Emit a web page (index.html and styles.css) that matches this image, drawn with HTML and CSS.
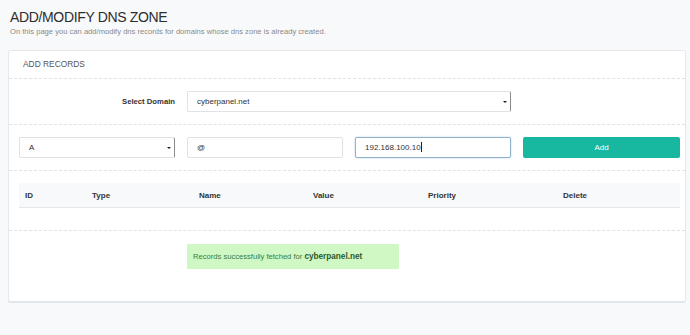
FILE: index.html
```html
<!DOCTYPE html>
<html>
<head>
<meta charset="utf-8">
<link rel="stylesheet" href="styles.css">
</head>
<body>
<div class="page">
  <div class="head">
    <h1 class="title">ADD/MODIFY DNS ZONE</h1>
    <p class="sub">On this page you can add/modify dns records for domains whose dns zone is already created.</p>
  </div>
  <div class="panel">
    <div class="panel-title">ADD RECORDS</div>
    <div class="sect domain-row">
      <label class="lbl">Select Domain</label>
      <div class="field sel wide">cyberpanel.net<span class="arrow"></span></div>
    </div>
    <div class="sect rec-row">
      <div class="field sel">A<span class="arrow"></span></div>
      <div class="field">@</div>
      <div class="field focus">192.168.100.10<span class="caret"></span></div>
      <div class="btn">Add</div>
    </div>
    <div class="sect table-sect">
      <div class="thead">
        <span class="c1">ID</span>
        <span class="c2">Type</span>
        <span class="c3">Name</span>
        <span class="c4">Value</span>
        <span class="c5">Priority</span>
        <span class="c6">Delete</span>
      </div>
    </div>
    <div class="alert-row">
      <div class="alert">Records successfully fetched for <b>cyberpanel.net</b></div>
    </div>
  </div>
</div>
</body>
</html>
```
FILE: styles.css
```css
html, body {
  margin: 0;
  padding: 0;
  background: #f8f9fb;
  font-family: "Liberation Sans", Arial, sans-serif;
  color: #333;
}
.page {
  padding: 6px 2px 0 8px;
}
.head {
  padding-left: 2px;
  height: 44px;
}
.title {
  margin: 0;
  padding-top: 2px;
  font-size: 14px;
  font-weight: normal;
  color: #2d2d2d;
  line-height: 19px;
  letter-spacing: -0.35px;
}
.sub {
  margin: 0;
  font-size: 7.6px;
  color: #8a8a8a;
  line-height: 10px;
}
.panel {
  background: #fff;
  border: 1px solid #e6e8eb;
  border-bottom: 2px solid #e3e6e9;
  border-radius: 2px;
  width: 678px;
  height: 253px;
  box-sizing: border-box;
}
.panel-title {
  height: 27px;
  line-height: 27px;
  padding-left: 14px;
  font-size: 8.4px;
  color: #555;
  border-bottom: 1px dashed #dfe2e6;
}
.sect {
  border-bottom: 1px dashed #dfe2e6;
}
.domain-row {
  height: 45px;
  display: grid;
  grid-template-columns: 156px 324px;
  column-gap: 12px;
  align-items: center;
  padding-left: 10px;
}
.lbl {
  text-align: right;
  font-weight: bold;
  font-size: 7.7px;
  color: #333;
}
.field {
  position: relative;
  height: 21px;
  box-sizing: border-box;
  border: 1px solid #dfe2e6;
  border-radius: 2px;
  background: #fff;
  font-size: 8px;
  line-height: 19px;
  padding-left: 9px;
  color: #333;
}
.sel {
  border-right: 1px solid #8a8a8a;
}
.arrow {
  position: absolute;
  right: 3px;
  top: 9px;
  width: 0;
  height: 0;
  border-left: 2px solid transparent;
  border-right: 2px solid transparent;
  border-top: 2px solid #222;
}
.focus {
  border-color: #8fb4cc;
  box-shadow: 0 0 2px rgba(102, 160, 200, 0.5);
}
.caret {
  display: inline-block;
  width: 1px;
  height: 10px;
  background: #222;
  vertical-align: middle;
  margin-top: -2px;
}
.rec-row {
  height: 45px;
  display: grid;
  grid-template-columns: 156px 156px 156px 157px;
  column-gap: 12px;
  align-items: center;
  padding-left: 10px;
}
.btn {
  height: 21px;
  background: #17b89f;
  border-radius: 2px;
  color: #fff;
  font-size: 8px;
  text-align: center;
  line-height: 21px;
}
.table-sect {
  height: 60px;
  padding: 12px 0 0 10px;
  box-sizing: border-box;
}
.thead {
  width: 661px;
  height: 25px;
  background: #f7f9fb;
  border-bottom: 1px solid #e3e6ea;
  display: flex;
  align-items: center;
  font-size: 8px;
  font-weight: bold;
  color: #333;
  box-sizing: border-box;
}
.thead span { display: block; }
.c1 { width: 73px; padding-left: 6px; box-sizing: border-box; }
.c2 { width: 107px; }
.c3 { width: 114px; }
.c4 { width: 115px; }
.c5 { width: 135px; }
.c6 { width: 100px; }
.alert-row {
  padding: 13px 0 0 178px;
}
.alert {
  width: 212px;
  height: 25px;
  box-sizing: border-box;
  background: #d0f8c4;
  color: #3b7a3a;
  font-size: 7.6px;
  line-height: 25px;
  padding-left: 6px;
}
.alert b {
  color: #2c5a2a;
  font-size: 8.2px;
}
```
